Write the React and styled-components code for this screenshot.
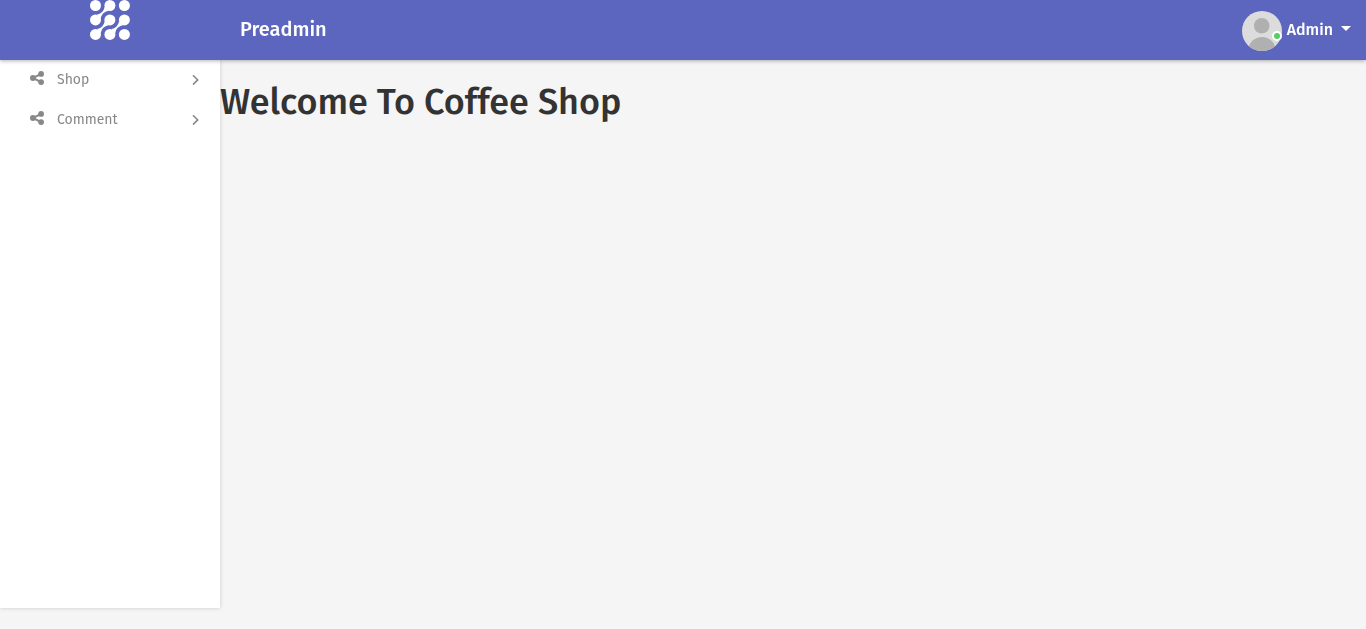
import React from "react";
import styled, { createGlobalStyle } from "styled-components";

const GlobalStyle = createGlobalStyle`
  *, *::before, *::after { box-sizing: border-box; }
  body {
    margin: 0;
    background: #f5f5f5;
    color: #333;
    font-family: "Fira Sans", Roboto, "Noto Sans", sans-serif;
    font-size: 14px;
  }
`;

const Page = styled.div`
  display: flex;
  flex-direction: column;
  min-height: 100vh;
`;

const Header = styled.header`
  position: sticky;
  top: 0;
  z-index: 2;
  display: flex;
  align-items: center;
  height: 60px;
  background: #5c66be;
  color: #fff;
  box-shadow: 0 1px 4px rgba(0, 0, 0, 0.3);
  will-change: transform;
`;

const LogoLink = styled.a`
  display: flex;
  justify-content: center;
  align-self: flex-start;
  width: 220px;
`;

const Brand = styled.div`
  flex: 1;
  padding: 0 20px 2px;
  font-size: 20px;
  font-weight: 500;
`;

const UserButton = styled.button`
  display: flex;
  align-items: center;
  gap: 5px;
  padding: 0 15px;
  border: 0;
  background: none;
  color: inherit;
  font: inherit;
  font-size: 16px;
  font-weight: 500;
  cursor: pointer;
`;

const UserName = styled.span`
  padding-bottom: 2px;
`;

const Avatar = styled.span`
  position: relative;
  display: flex;
  margin-top: 2px;
`;

const OnlineDot = styled.span`
  position: absolute;
  right: 0;
  bottom: 10px;
  width: 10px;
  height: 10px;
  border: 2px solid #fff;
  border-radius: 50%;
  background: #55ce63;
`;

const Caret = styled.span`
  margin: 0 0 3px 3px;
  border: 5px solid transparent;
  border-top-color: #fff;
  border-bottom: 0;
`;

const Body = styled.div`
  flex: 1;
  display: flex;
`;

const Sidebar = styled.nav`
  width: 220px;
  margin-bottom: 21px;
  background: #fff;
  box-shadow: 0 0 4px rgba(0, 0, 0, 0.18);
  will-change: transform;
`;

const Menu = styled.ul`
  margin: 0;
  padding: 0;
  list-style: none;
`;

const MenuLink = styled.a`
  display: flex;
  align-items: center;
  height: 40px;
  padding: 0 20px 4px 30px;
  color: #888;
  text-decoration: none;
`;

const MenuLabel = styled.span`
  flex: 1;
  padding: 2px 0 0 13px;
`;

const Content = styled.main`
  flex: 1;
  padding-top: 20px;
`;

const Title = styled.h1`
  margin: 0;
  font-size: 36px;
  font-weight: 500;
  line-height: 44px;
`;

const DOTS = [5.5, 19.9, 34.4];
const BRIDGES = [
  [5.5, 19.9],
  [5.5, 34.4],
  [19.9, 34.4],
];

function Logo() {
  return (
    <svg width="40" height="40" viewBox="0 0 40 40" role="img" aria-label="Preadmin">
      <g fill="#fff">
        {DOTS.map((y) => DOTS.map((x) => <circle key={`${x}-${y}`} cx={x} cy={y} r="5.5" />))}
        {BRIDGES.map(([x, y]) => (
          <path
            key={`${x}-${y}`}
            transform={`translate(${x} ${y})`}
            d="M1.5-5.3Q4.5-5.8 6.6-7.8 8.6-9.9 9.1-12.9L12.9-9.1Q9.9-8.6 7.8-6.6 5.8-4.5 5.3-1.5Z"
          />
        ))}
      </g>
    </svg>
  );
}

function Person() {
  return (
    <svg width="40" height="40" viewBox="0 0 40 40" aria-hidden="true">
      <clipPath id="avatar-clip">
        <circle cx="20" cy="20" r="20" />
      </clipPath>
      <g clipPath="url(#avatar-clip)">
        <rect width="40" height="40" fill="#dcdcdc" />
        <circle cx="19.7" cy="14.7" r="7.8" fill="#b0b0b0" />
        <ellipse cx="20" cy="39" rx="13.5" ry="13" fill="#b0b0b0" />
      </g>
    </svg>
  );
}

function ShareIcon() {
  return (
    <svg width="14" height="14" viewBox="0 0 14 14" aria-hidden="true">
      <path d="M11.1 2.9L2.9 7L11.1 11.1" fill="none" stroke="#888" strokeWidth="2" />
      <g fill="#888">
        <circle cx="11.1" cy="2.9" r="2.9" />
        <circle cx="2.9" cy="7" r="2.9" />
        <circle cx="11.1" cy="11.1" r="2.9" />
      </g>
    </svg>
  );
}

function Chevron() {
  return (
    <svg width="8" height="14" viewBox="0 0 8 14" aria-hidden="true">
      <path d="M1 4.2L5.7 8.9L1 13.6" fill="none" stroke="#888" strokeWidth="1.6" />
    </svg>
  );
}

export default function App() {
  return (
    <Page>
      <GlobalStyle />
      <Header>
        <LogoLink href="#">
          <Logo />
        </LogoLink>
        <Brand>Preadmin</Brand>
        <UserButton type="button" aria-haspopup="true">
          <Avatar>
            <Person />
            <OnlineDot />
          </Avatar>
          <UserName>Admin</UserName>
          <Caret />
        </UserButton>
      </Header>
      <Body>
        <Sidebar>
          <Menu>
            {["Shop", "Comment"].map((label) => (
              <li key={label}>
                <MenuLink href="#">
                  <ShareIcon />
                  <MenuLabel>{label}</MenuLabel>
                  <Chevron />
                </MenuLink>
              </li>
            ))}
          </Menu>
        </Sidebar>
        <Content>
          <Title>Welcome To Coffee Shop</Title>
        </Content>
      </Body>
    </Page>
  );
}
